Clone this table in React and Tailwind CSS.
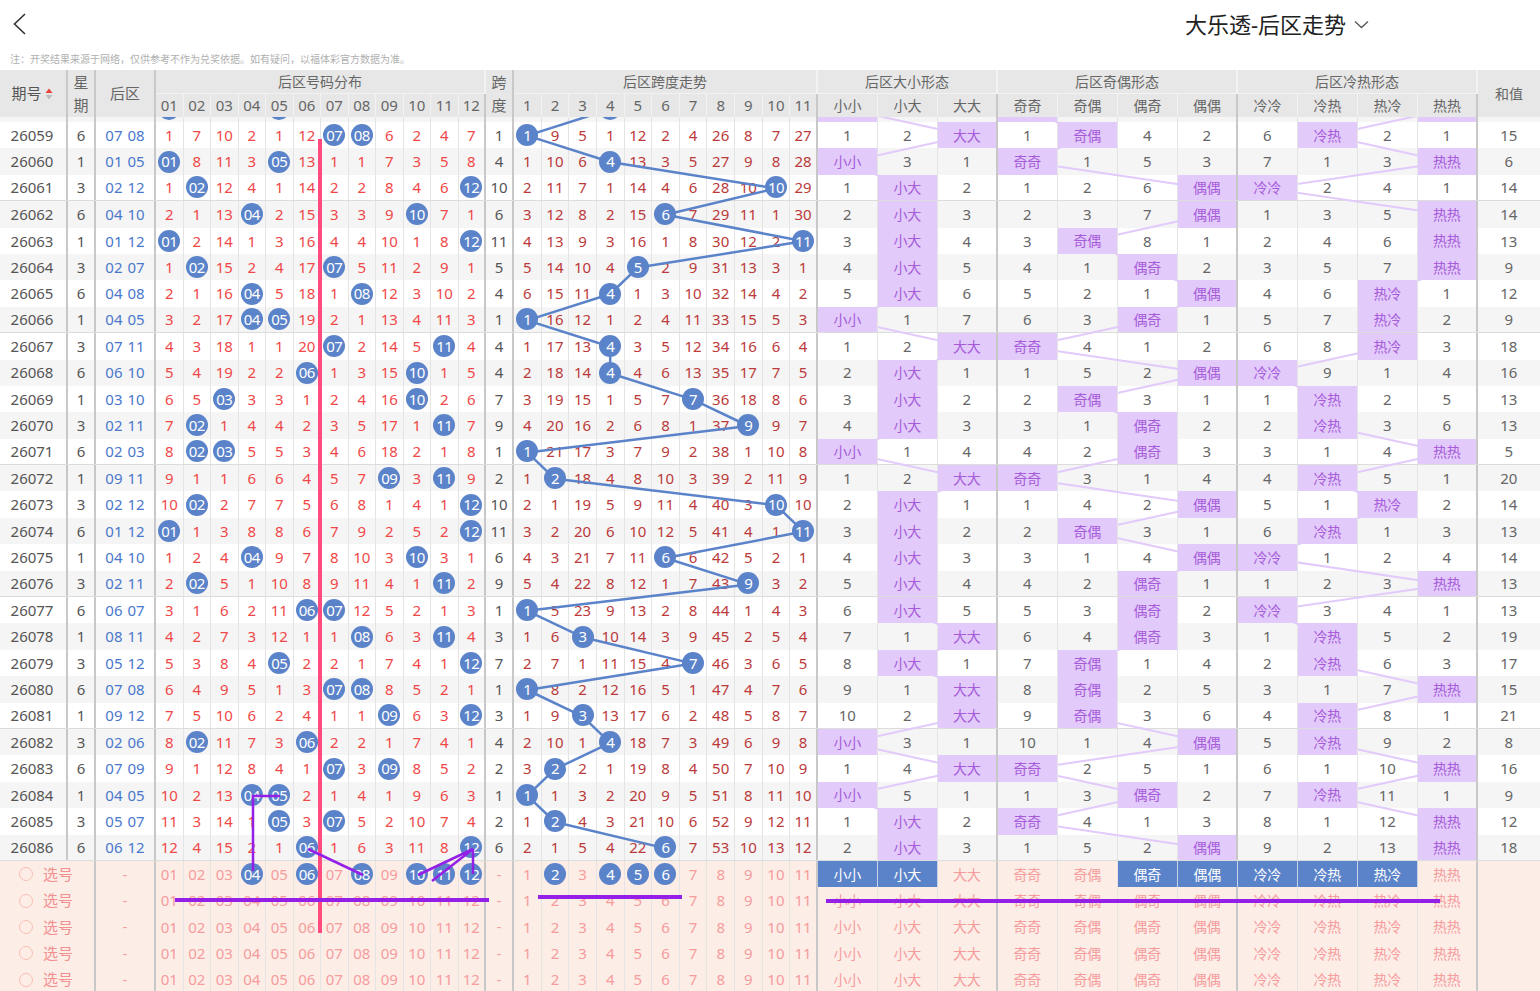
import React from 'react'

// period, weekday, back numbers, hot/cold pattern index
const DRAWS = [
  [26058, 3, 1, 5, 3],
  [26059, 6, 7, 8, 1],
  [26060, 1, 1, 5, 3],
  [26061, 3, 2, 12, 0],
  [26062, 6, 4, 10, 3],
  [26063, 1, 1, 12, 3],
  [26064, 3, 2, 7, 3],
  [26065, 6, 4, 8, 2],
  [26066, 1, 4, 5, 2],
  [26067, 3, 7, 11, 2],
  [26068, 6, 6, 10, 0],
  [26069, 1, 3, 10, 1],
  [26070, 3, 2, 11, 1],
  [26071, 6, 2, 3, 3],
  [26072, 1, 9, 11, 1],
  [26073, 3, 2, 12, 2],
  [26074, 6, 1, 12, 1],
  [26075, 1, 4, 10, 0],
  [26076, 3, 2, 11, 3],
  [26077, 6, 6, 7, 0],
  [26078, 1, 8, 11, 1],
  [26079, 3, 5, 12, 1],
  [26080, 6, 7, 8, 3],
  [26081, 1, 9, 12, 1],
  [26082, 3, 2, 6, 1],
  [26083, 6, 7, 9, 3],
  [26084, 1, 4, 5, 1],
  [26085, 3, 5, 7, 3],
  [26086, 6, 6, 12, 3],
]

const DX = ['小小', '小大', '大大']
const JO = ['奇奇', '奇偶', '偶奇', '偶偶']
const LR = ['冷冷', '冷热', '热冷', '热热']

const THIN = 'border-r border-[#e4e4e4]'
const THICK = 'border-r-2 border-[#c8c8c8]'
const ROW_H = 26.4

const pad = (n) => String(n).padStart(2, '0')

function buildRows() {
  let num = [0, 6, 9, 1, 0, 11, 5, 4, 5, 1, 3, 6]
  let kd = [3, 8, 4, 0, 11, 1, 3, 25, 7, 6, 26]
  let dx = [0, 1, 2]
  let jo = [0, 3, 3, 1]
  let lr = [5, 2, 1, 0]
  return DRAWS.map(([period, week, a, b, hot], idx) => {
    const dxi = (a > 6 ? 1 : 0) + (b > 6 ? 1 : 0)
    const joi = (a % 2 ? 0 : 2) + (b % 2 ? 0 : 1)
    const span = b - a
    if (idx > 0) {
      num = num.map((v, i) => (i + 1 === a || i + 1 === b ? 0 : v + 1))
      kd = kd.map((v, i) => (i + 1 === span ? 0 : v + 1))
      dx = dx.map((v, i) => (i === dxi ? 0 : v + 1))
      jo = jo.map((v, i) => (i === joi ? 0 : v + 1))
      lr = lr.map((v, i) => (i === hot ? 0 : v + 1))
    }
    return { period, week, a, b, span, sum: a + b, num, kd, dx, jo, lr, dxi, joi, hot }
  })
}

const ROWS = buildRows()

const kdX = (i) => 514 + 27.63 * i + 13.3
const dxX = (i) => 818 + 60 * i + 29.5
const joX = (i) => 998 + 60 * i + 29.5
const lrX = (i) => 1238 + 60 * i + 29.5
const rowY = (i) => i * ROW_H + ROW_H / 2

function Ball({ children }) {
  return (
    <span className="relative z-10 flex h-[22px] w-[22px] items-center justify-center rounded-full bg-[#5b83c9] text-[15px] tracking-[-0.6px] text-white">
      {children}
    </span>
  )
}

function PatternCells({ values, labels, stub }) {
  return values.map((v, i) => (
    <div
      key={labels[i]}
      className={`flex h-full w-[60px] shrink-0 items-center justify-center ${i === values.length - 1 ? THICK : THIN} ${
        v === 0 ? 'relative z-10 bg-[#e2cafb] text-[14px] text-[#a65cd9]' : 'text-[15px] text-[#666]'
      }`}
    >
      {stub ? '' : v === 0 ? labels[i] : v}
    </div>
  ))
}

// the first row sits mostly under the header (scrolled), so it shows no text
function DataRow({ r, idx }) {
  const stub = idx === 0
  const bg = idx % 2 === 1 ? 'bg-white' : 'bg-[#f5f5f5]'
  const sep = r.period % 5 === 1 ? 'border-b border-[#dcdcdc]' : ''
  return (
    <div className={`flex h-[26.4px] ${bg} ${sep}`}>
      <div className={`flex h-full w-[68px] shrink-0 items-center justify-center pr-[2px] text-[15px] text-[#555] ${THICK}`}>{stub ? '' : r.period}</div>
      <div className={`flex h-full w-[28px] shrink-0 items-center justify-center text-[15px] text-[#555] ${THICK}`}>{stub ? '' : r.week}</div>
      <div className={`flex h-full w-[60px] shrink-0 items-center justify-center gap-[5px] text-[15px] text-[#4a78cc] ${THICK}`}>
        {!stub && (
          <>
            <span>{pad(r.a)}</span>
            <span>{pad(r.b)}</span>
          </>
        )}
      </div>
      {r.num.map((v, i) => (
        <div key={i} className={`flex h-full w-[27.5px] shrink-0 items-center justify-center text-[15px] text-[#f04848] ${i === 11 ? THICK : THIN}`}>
          {v === 0 ? <Ball>{stub ? '' : pad(i + 1)}</Ball> : stub ? '' : v}
        </div>
      ))}
      <div className={`flex h-full w-[28px] shrink-0 items-center justify-center text-[15px] text-[#555] ${THICK}`}>{stub ? '' : r.span}</div>
      {r.kd.map((v, i) => (
        <div key={i} className={`flex h-full w-[27.63px] shrink-0 items-center justify-center text-[15px] text-[#bb3a3a] ${i === 10 ? THICK : THIN}`}>
          {v === 0 ? <Ball>{stub ? '' : i + 1}</Ball> : stub ? '' : v}
        </div>
      ))}
      <PatternCells values={r.dx} labels={DX} stub={stub} />
      <PatternCells values={r.jo} labels={JO} stub={stub} />
      <PatternCells values={r.lr} labels={LR} stub={stub} />
      <div className="flex h-full w-[62px] shrink-0 items-center justify-center text-[15px] text-[#666]">{stub ? '' : r.sum}</div>
    </div>
  )
}

const SEL_NUMS = [4, 6, 8, 10, 11, 12]
const SEL_KD = [2, 4, 5, 6]
const SEL_DX = [0, 1]
const SEL_JO = [2, 3]
const SEL_LR = [0, 1, 2]

function SelLabels({ labels, picked }) {
  return labels.map((l, i) => (
    <div
      key={l}
      className={`flex h-full w-[60px] shrink-0 items-center justify-center text-[14px] ${
        picked.includes(i)
          ? 'bg-[#5b83c9] text-white border-r border-[#c9d3e8]'
          : `text-[#f59c9c] ${i === labels.length - 1 ? THICK : THIN}`
      }`}
    >
      {l}
    </div>
  ))
}

function SelectRow({ active }) {
  const nums = active ? SEL_NUMS : []
  const kds = active ? SEL_KD : []
  return (
    <div className="flex h-[26.4px] bg-[#fdede7] text-[#f59c9c]">
      <div className={`flex h-full w-[96px] shrink-0 items-center gap-[10px] pl-[19px] ${THICK}`}>
        <span className="h-[14px] w-[14px] rounded-full border border-[#f8bfb1]" />
        <span className="text-[15px] text-[#f29090]">选号</span>
      </div>
      <div className={`flex h-full w-[60px] shrink-0 items-center justify-center text-[14px] ${THICK}`}>-</div>
      {Array.from({ length: 12 }, (_, i) => (
        <div key={i} className={`flex h-full w-[27.5px] shrink-0 items-center justify-center text-[15px] ${i === 11 ? THICK : THIN}`}>
          {nums.includes(i + 1) ? <Ball>{pad(i + 1)}</Ball> : pad(i + 1)}
        </div>
      ))}
      <div className={`flex h-full w-[28px] shrink-0 items-center justify-center text-[14px] ${THICK}`}>-</div>
      {Array.from({ length: 11 }, (_, i) => (
        <div key={i} className={`flex h-full w-[27.63px] shrink-0 items-center justify-center text-[15px] ${i === 10 ? THICK : THIN}`}>
          {kds.includes(i + 1) ? <Ball>{i + 1}</Ball> : i + 1}
        </div>
      ))}
      <SelLabels labels={DX} picked={active ? SEL_DX : []} />
      <SelLabels labels={JO} picked={active ? SEL_JO : []} />
      <SelLabels labels={LR} picked={active ? SEL_LR : []} />
      <div className="h-full w-[62px] shrink-0" />
    </div>
  )
}

function Group({ title, labels, total, cellW, size = 'text-[15px]' }) {
  return (
    <div className={`flex shrink-0 flex-col ${total}`}>
      <div className={`flex h-[24px] items-center justify-center border-b border-[#f2f2f2] text-[14px] ${THICK}`}>{title}</div>
      <div className="flex h-[23px]">
        {labels.map((l, i) => (
          <div
            key={l}
            className={`flex shrink-0 items-center justify-center ${size} ${cellW} ${i === labels.length - 1 ? THICK : 'border-r border-[#f2f2f2]'}`}
          >
            {l}
          </div>
        ))}
      </div>
    </div>
  )
}

function Header() {
  return (
    <div className="relative z-20 flex h-[47px] bg-[#e7e7e7] text-[#666]">
      <div className={`flex w-[68px] shrink-0 items-center justify-center gap-[3px] pr-[2px] text-[15px] text-[#555] ${THICK}`}>
        期号
        <svg width="8" height="14" viewBox="0 0 8 14">
          <path d="M4 1.5 L7.5 6 H0.5Z" fill="#e8423c" />
          <path d="M4 12.5 L7.5 8 H0.5Z" fill="#bdbdbd" />
        </svg>
      </div>
      <div className={`flex w-[28px] shrink-0 flex-col text-[15px] ${THICK}`}>
        <div className="flex h-[24px] items-center justify-center">星</div>
        <div className="flex h-[23px] items-center justify-center">期</div>
      </div>
      <div className={`flex w-[60px] shrink-0 items-center justify-center text-[15px] ${THICK}`}>后区</div>
      <Group title="后区号码分布" labels={Array.from({ length: 12 }, (_, i) => pad(i + 1))} total="w-[330px]" cellW="w-[27.5px]" />
      <div className={`flex w-[28px] shrink-0 flex-col text-[15px] ${THICK}`}>
        <div className="flex h-[24px] items-center justify-center">跨</div>
        <div className="flex h-[23px] items-center justify-center">度</div>
      </div>
      <Group title="后区跨度走势" labels={Array.from({ length: 11 }, (_, i) => String(i + 1))} total="w-[303.93px]" cellW="w-[27.63px]" />
      <Group title="后区大小形态" labels={DX} total="w-[180px]" cellW="w-[60px]" size="text-[14px]" />
      <Group title="后区奇偶形态" labels={JO} total="w-[240px]" cellW="w-[60px]" size="text-[14px]" />
      <Group title="后区冷热形态" labels={LR} total="w-[240px]" cellW="w-[60px]" size="text-[14px]" />
      <div className="flex w-[62px] shrink-0 items-center justify-center text-[14px]">和值</div>
    </div>
  )
}

function TrendLines() {
  const h = ROWS.length * ROW_H
  const seg = (xf, key) =>
    ROWS.slice(1).map((r, i) => {
      const p = ROWS[i]
      return { x1: xf(p), y1: rowY(i), x2: xf(r), y2: rowY(i + 1), k: `${key}${i}` }
    })
  const blue = seg((r) => kdX(r.span - 1), 'k')
  const purple = [
    ...seg((r) => dxX(r.dxi), 'd'),
    ...seg((r) => joX(r.joi), 'j'),
    ...seg((r) => lrX(r.hot), 'l'),
  ]
  return (
    <svg className="pointer-events-none absolute left-0 top-0 z-[5]" width="1540" height={h}>
      {purple.map((s) => (
        <line key={s.k} x1={s.x1} y1={s.y1} x2={s.x2} y2={s.y2} stroke="#e2cafb" strokeWidth="2" />
      ))}
      {blue.map((s) => (
        <line key={s.k} x1={s.x1} y1={s.y1} x2={s.x2} y2={s.y2} stroke="#5b83c9" strokeWidth="2.5" />
      ))}
    </svg>
  )
}

export default function App() {
  return (
    <div className="relative h-[991px] w-[1540px] overflow-hidden bg-white font-['Noto_Sans','Noto_Sans_CJK_SC',sans-serif]">
      <div className="flex h-[48px] items-center">
        <div className="pl-[13px]">
          <svg width="14" height="22" viewBox="0 0 14 22">
            <polyline points="12,1 1.5,11 12,21" fill="none" stroke="#333" strokeWidth="1.6" />
          </svg>
        </div>
        <div className="ml-auto mr-[171px] flex items-center gap-[8px]">
          <span className="text-[22px] text-[#222]">大乐透-后区走势</span>
          <svg width="15" height="9" viewBox="0 0 15 9">
            <polyline points="1,1.5 7.5,7.5 14,1.5" fill="none" stroke="#555" strokeWidth="1.3" />
          </svg>
        </div>
      </div>
      <div className="h-[22px] pl-[10px] text-[10px] leading-[22px] text-[#b0b0b0]">
        注：开奖结果来源于网络，仅供参考不作为兑奖依据。如有疑问，以福体彩官方数据为准。
      </div>
      <Header />
      <div className="relative h-[874px] overflow-hidden">
        <div className="relative mt-[-21.4px]">
          {ROWS.map((r, i) => (
            <DataRow key={r.period} r={r} idx={i} />
          ))}
          <TrendLines />
          <SelectRow active />
          <SelectRow />
          <SelectRow />
          <SelectRow />
          <SelectRow />
        </div>
      </div>

      {/* hand-drawn marks over the chart */}
      <svg className="pointer-events-none absolute left-0 top-0 z-50" width="1540" height="991">
        <line x1="320" y1="139" x2="320" y2="933" stroke="#ff4b7d" strokeWidth="4" />
        <polyline points="280,796 253,796 253,871" fill="none" stroke="#9420e8" strokeWidth="2.5" />
        <line x1="308" y1="849" x2="363" y2="875" stroke="#9420e8" strokeWidth="2.5" />
        <line x1="473" y1="849" x2="418" y2="875" stroke="#9420e8" strokeWidth="2.5" />
        <line x1="473" y1="849" x2="432" y2="881" stroke="#9420e8" strokeWidth="2.5" />
        <line x1="473" y1="849" x2="473" y2="874" stroke="#9420e8" strokeWidth="2.5" />
        <line x1="175" y1="900" x2="489" y2="900" stroke="#9420e8" strokeWidth="4" />
        <line x1="538" y1="897" x2="682" y2="897" stroke="#9420e8" strokeWidth="4" />
        <line x1="826" y1="901" x2="1440" y2="901" stroke="#9420e8" strokeWidth="4" />
      </svg>
    </div>
  )
}
